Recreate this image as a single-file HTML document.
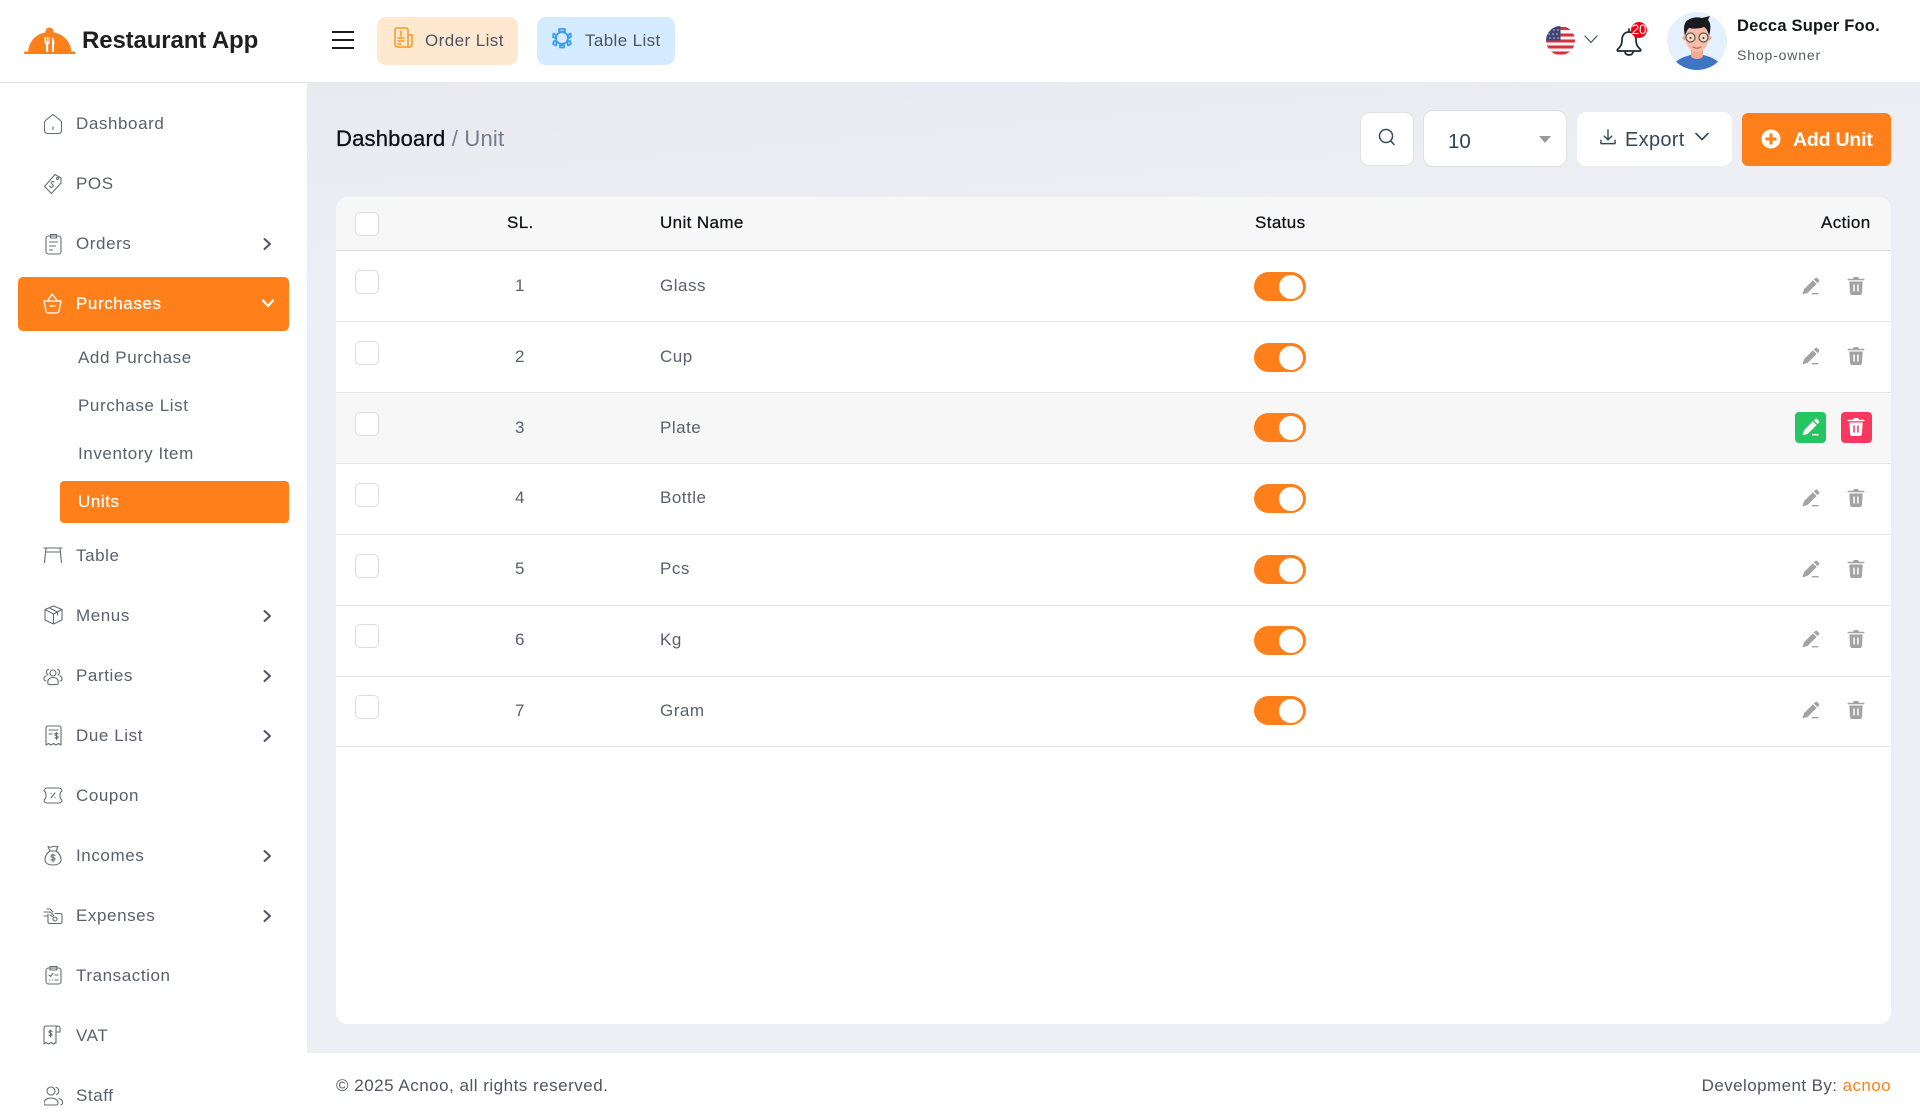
<!DOCTYPE html>
<html><head><meta charset="utf-8"><title>Unit</title>
<style>
*{box-sizing:border-box;margin:0;padding:0}
html,body{width:1920px;height:1119px;overflow:hidden;background:#fff}
body{position:relative;font-family:"Liberation Sans",sans-serif;color:#5a606c}
.a,.t,svg.i{position:absolute}
.t{white-space:nowrap;line-height:24px;height:24px}
.m{left:76px;font-size:17px;letter-spacing:.58px;color:#5a606c}
.s{left:78px;font-size:17px;letter-spacing:.58px;color:#5a606c}
.th{font-size:17px;letter-spacing:.38px;color:#0f1116;-webkit-text-stroke:.25px #0f1116}
.td{font-size:17px;letter-spacing:.5px;color:#5a606c}
svg.i{fill:none;stroke:#666b75;stroke-width:1.1;stroke-linecap:round;stroke-linejoin:round}
svg.c{stroke:#4e5562;stroke-width:2}
svg.g{stroke:none;fill:#a3a3a3}
svg.w{stroke:none;fill:#fff}
.cb{position:absolute;left:355px;width:24px;height:24px;border:1.5px solid #dcdcde;border-radius:5px;background:#fff}
.tg{position:absolute;left:1254px;width:52px;height:29px;border-radius:15px;background:#ff801a}
.tg:after{content:"";position:absolute;left:25px;top:2.5px;width:24px;height:24px;border-radius:50%;background:#fff}
.ln{position:absolute;left:336px;width:1555px;height:1px;background:#e6e6e8}
.btn{position:absolute;border-radius:9px}
</style></head><body>
<svg width="0" height="0" style="position:absolute"><defs>
<symbol id="pen" viewBox="0 0 18 18"><path d="M13 1.200a1.700 1.700 0 0 1 2.400 0l1.300 1.300a1.700 1.700 0 0 1 0 2.400l-1.200 1.200-3.700-3.700zM10.900 3.300l3.700 3.700-8.800 8.800-4.400 1.400a.6.6 0 0 1-.8-.7l1.500-4.400zM10 16h6.500v1.400H10z"/></symbol>
<symbol id="trash" viewBox="0 0 18 18"><path d="M6 1.700C6.300.6 7 0 8 0h2c1 0 1.700.6 2 1.700h4.700c.5 0 .8.300.8.700s-.3.800-.8.800H1.300c-.5 0-.8-.4-.8-.8s.3-.7.800-.7zM2.300 4.500h13.400l-.8 11.500c-.1 1.200-1 2-2.100 2H5.200c-1.100 0-2-.8-2.100-2zM6.300 7.500v7h1.500v-7zm3.900 0v7h1.500v-7z" fill-rule="evenodd"/></symbol>
<symbol id="chev" viewBox="0 0 10 14"><path d="M2 2l5.500 5L2 12"/></symbol>
</defs></svg>

<!-- main bg -->
<div class="a" style="left:307px;top:82px;width:1613px;height:971px;background:linear-gradient(175deg,#e9eaf0 0,#eeeef5 20%,#eeeef5 100%)"></div>
<div class="a" style="left:0;top:82px;width:307px;height:1px;background:#e2e2e4"></div>

<!-- logo -->
<svg class="i" style="left:24px;top:27px;stroke:none" width="52" height="28" viewBox="0 0 52 28">
<circle cx="25.500" cy="4.500" r="4" fill="#ff801a"/><path d="M4 26C4.500 13 14 5 25.500 5S47 13 47.500 26z" fill="#ff801a"/><rect x="0" y="24.500" width="51.500" height="2.500" rx="1" fill="#ff801a"/>
<path d="M20.500 10v5c0 1.500.7 2.200 1.500 2.500V25h2.200v-7.500c.8-.3 1.400-1 1.400-2.500v-5h-1v4.500h-.8V10h-1v4.500H22V10z" fill="#fff"/><path d="M28 9.500c1.500 1.500 2.500 4 2.500 7.500h-.5v8h-2z" fill="#fff"/></svg>
<div class="t" style="left:82px;top:29px;font-size:24px;font-weight:bold;color:#1f1f1f;letter-spacing:-.12px">Restaurant App</div>

<!-- hamburger -->
<div class="a" style="left:332px;top:31px;width:22px;height:2px;background:#1a1c20"></div>
<div class="a" style="left:332px;top:39px;width:22px;height:2px;background:#1a1c20"></div>
<div class="a" style="left:332px;top:47px;width:22px;height:2px;background:#1a1c20"></div>

<!-- quick buttons -->
<div class="btn" style="left:377px;top:17px;width:141px;height:48px;background:#ffe8cf"></div>
<svg class="i" style="left:394px;top:27px;stroke:#f7971e;stroke-width:1.500" width="20" height="22" viewBox="0 0 20 22"><path d="M14 20H4a3 3 0 0 1-3-3V3a2 2 0 0 1 2-2h9a2 2 0 0 1 2 2v17a3 3 0 0 0 4-3V8h-4"/><path d="M4 11h6M4 14h6M4 17h3M7 4v5" /></svg>
<div class="t" style="left:425px;top:29px;font-size:17px;letter-spacing:.42px;color:#4e5562">Order List</div>
<div class="btn" style="left:537px;top:17px;width:138px;height:48px;background:#d5ebff"></div>
<svg class="i" style="left:551px;top:27px;stroke:#3d9bf0;stroke-width:1.800" width="22" height="22" viewBox="0 0 22 22"><circle cx="11" cy="11" r="6"/><path d="M8 2h6v2.500H8zM2.500 6.500l3 1.500-1.500 3-2-1zM19.500 6.500l-3 1.500 1.500 3 2-1zM3 14l3 1-1 3.500-3-1.500zM19 14l-3 1 1 3.500 3-1.500zM9 18h4v2.500H9z"/></svg>
<div class="t" style="left:585px;top:29px;font-size:17px;letter-spacing:.38px;color:#4e5562">Table List</div>

<!-- flag -->
<svg class="i" style="left:1546px;top:26px;stroke:none" width="29" height="29" viewBox="0 0 29 29"><defs><clipPath id="fc"><circle cx="14.500" cy="14.500" r="14.500"/></clipPath></defs><g clip-path="url(#fc)"><rect width="29" height="29" fill="#f5f5f7"/><path d="M0 1h29v3H0zM0 7.500h29v3H0zM0 13.500h29v3H0zM0 19.500h29v3H0zM0 25.500h29v3H0z" fill="#d6313c"/><rect width="14.500" height="14.500" fill="#3d4574"/><g fill="#c9cde0"><circle cx="4" cy="4" r=".8"/><circle cx="8" cy="4" r=".8"/><circle cx="12" cy="4" r=".8"/><circle cx="3" cy="8" r=".8"/><circle cx="7" cy="8" r=".8"/><circle cx="11" cy="8" r=".8"/><circle cx="4" cy="12" r=".8"/><circle cx="8" cy="12" r=".8"/><circle cx="12" cy="12" r=".8"/></g></g></svg>
<svg class="i" style="left:1584px;top:35px;stroke:#4a4f58;stroke-width:1.200" width="14" height="9" viewBox="0 0 14 9"><path d="M1 1l6 6.500L13 1"/></svg>
<!-- bell -->
<svg class="i" style="left:1616px;top:27px;stroke:#1c2733;stroke-width:1.700" width="26" height="30" viewBox="0 0 26 30"><path d="M13 2v3M13 5c-5 0-7 4-7 8 0 5-2 7-4.500 9.500-.5.500-.2 1.500.5 1.500h22c.7 0 1-1 .5-1.500C22 20 20 18 20 13c0-4-2-8-7-8zM9 25c.5 2 2 3 4 3s3.500-1 4-3"/></svg>
<div class="a" style="left:1631px;top:22px;width:16px;height:16px;border-radius:50%;background:#f10010;color:#fff;font-size:13.500px;line-height:16px;text-align:center;letter-spacing:-.2px">20</div>
<!-- avatar -->
<svg class="i" style="left:1667px;top:12px;stroke:none" width="60" height="58" viewBox="0 0 60 58"><defs><clipPath id="av"><ellipse cx="30" cy="29" rx="30" ry="29"/></clipPath></defs><g clip-path="url(#av)"><rect width="60" height="58" fill="#e4f1fc"/><path d="M5 58C6 49 15 45 24 43h12c9 2 18 6 19 15z" fill="#3d74c4"/><path d="M24 34h12v9c0 3-3 4-6 4s-6-1-6-4z" fill="#f2aa92"/><ellipse cx="30" cy="26" rx="11.500" ry="14" fill="#f7bda6"/><circle cx="18" cy="26" r="2.500" fill="#f2aa92"/><circle cx="42" cy="26" r="2.500" fill="#f2aa92"/><path d="M18 24c-2-8-1-14 3-16 4-3 10-3 14-2l8-2-2 4c3 3 3 9 1 16-1-4-2-7-5-9-5 2-11 2-15 1-2 2-3 5-4 8z" fill="#1a1b20"/><g fill="#f3e5db" fill-opacity=".7" stroke="#6b5a4a" stroke-width="1.300"><circle cx="23.500" cy="25.500" r="4.500"/><circle cx="36.500" cy="25.500" r="4.500"/></g><circle cx="23.500" cy="26" r="1" fill="#333"/><circle cx="36.500" cy="26" r="1" fill="#333"/><path d="M26 35c2.500 1.500 5.500 1.500 8 0" stroke="#c8604f" stroke-width="1.100" fill="none"/></g></svg>
<div class="t" style="left:1737px;top:14px;font-size:16.500px;font-weight:bold;letter-spacing:.22px;color:#14161a">Decca Super Foo.</div>
<div class="t" style="left:1737px;top:43px;font-size:14px;letter-spacing:.85px;color:#555b66">Shop-owner</div>

<!-- sidebar items -->
<svg class="i" style="left:43px;top:113px" width="20" height="22" viewBox="0 0 20 22"><path d="M10 1.500L2.500 7.500a3 3 0 0 0-1 2v8a3 3 0 0 0 3 3h11a3 3 0 0 0 3-3v-8a3 3 0 0 0-1-2zM10 14v2.500"/></svg>
<div class="t m" style="top:112px">Dashboard</div>
<svg class="i" style="left:43px;top:173px" width="20" height="22" viewBox="0 0 20 22"><path d="M12 1.500l6 3.500v5L8.500 20.500 1.500 13.500z" /><circle cx="14.500" cy="5.500" r="1"/><path d="M11 9c-1.500-1-3.500 0-2.500 1.500S11 12 10 13.500 7 14 6.500 13"/></svg>
<div class="t m" style="top:172px">POS</div>
<svg class="i" style="left:45px;top:233px" width="17" height="22" viewBox="0 0 17 22"><rect x="1" y="3" width="15" height="18" rx="2.500"/><path d="M5.500 1.500h6V5h-6zM4.500 9h8M4.500 13h6M4.500 17h3"/></svg>
<div class="t m" style="top:232px">Orders</div>
<svg class="i c" style="left:262px;top:237px" width="11" height="14" viewBox="0 0 10 14"><use href="#chev"/></svg>

<div class="a" style="left:18px;top:277px;width:271px;height:54px;background:#ff801a;border-radius:5px"></div>
<svg class="i" style="left:43px;top:293px;stroke:#fff;stroke-width:1.300" width="19" height="22" viewBox="0 0 19 22"><path d="M1 8h17l-2 10a2.500 2.500 0 0 1-2.500 2h-8A2.500 2.500 0 0 1 3 18zM4.500 8L9 1l5.500 7M7 13h5"/></svg>
<div class="t m" style="top:292px;color:#fff;-webkit-text-stroke:.2px #fff">Purchases</div>
<svg class="i" style="left:261px;top:298px;stroke:#fff;stroke-width:2.200" width="14" height="11" viewBox="0 0 14 11"><path d="M2 2.500l5 5.500 5-5.500"/></svg>

<div class="t s" style="top:346px">Add Purchase</div>
<div class="t s" style="top:394px">Purchase List</div>
<div class="t s" style="top:442px">Inventory Item</div>
<div class="a" style="left:60px;top:481px;width:229px;height:42px;background:#ff801a;border-radius:4px"></div>
<div class="t s" style="top:490px;color:#fff;-webkit-text-stroke:.2px #fff">Units</div>

<svg class="i" style="left:43px;top:546px" width="20" height="18" viewBox="0 0 20 18"><path d="M1 2h18M3 2L1.500 16.500M17 2l1.500 14.500M3 6h14"/></svg>
<div class="t m" style="top:544px">Table</div>
<svg class="i" style="left:44px;top:605px" width="19" height="20" viewBox="0 0 19 20"><path d="M9.500 1L18 4.500v10.500L9.500 19 1 15V4.500zM1 4.500L9.500 9 18 4.500M9.500 9v10M5 2.800l8.500 4.200v3"/></svg>
<div class="t m" style="top:604px">Menus</div>
<svg class="i c" style="left:262px;top:609px" width="11" height="14" viewBox="0 0 10 14"><use href="#chev"/></svg>
<svg class="i" style="left:43px;top:666px" width="20" height="20" viewBox="0 0 20 20"><circle cx="10" cy="7" r="3"/><path d="M5 18c-1-5 2-6.500 5-6.500s6 1.500 5 6.500c-.3.800-9.700.8-10 0zM5 9C3 8 3 3.500 5.500 3.500M15 9c2-1 2-5.500-.5-5.500M3 15c-3-.500-2.500-4 0-5M17 15c3-.500 2.500-4 0-5"/></svg>
<div class="t m" style="top:664px">Parties</div>
<svg class="i c" style="left:262px;top:669px" width="11" height="14" viewBox="0 0 10 14"><use href="#chev"/></svg>
<svg class="i" style="left:45px;top:725px" width="17" height="21" viewBox="0 0 17 21"><path d="M1 3a2 2 0 0 1 2-2h11a2 2 0 0 1 2 2v17l-2.500-1.500-2.500 1.500-2.500-1.500L6 20l-2.500-1.500L1 20zM4 5h9M4 9h3M11.500 7.500v7M13 9c-1-1-3-1-3 .5s3 1 3 2.500-2 1.500-3 .5"/></svg>
<div class="t m" style="top:724px">Due List</div>
<svg class="i c" style="left:262px;top:729px" width="11" height="14" viewBox="0 0 10 14"><use href="#chev"/></svg>
<svg class="i" style="left:43px;top:787px" width="20" height="17" viewBox="0 0 20 17"><path d="M4 1h12a3 3 0 0 1 3 3c-1 .5-2 2-2 4.500s1 4 2 4.500a3 3 0 0 1-3 3H4a3 3 0 0 1-3-3c1-.5 2-2 2-4.500S2 4.500 1 4a3 3 0 0 1 3-3zM8 11l4-5M8 6.500h.1M12 10.500h.1"/></svg>
<div class="t m" style="top:784px">Coupon</div>
<svg class="i" style="left:44px;top:845px" width="18" height="21" viewBox="0 0 18 21"><path d="M6 6L4 1.500c2 1 3 1 5 0s3 1 5 0L12 6zM6 6C3 8 1 11 1 14.500 1 18 4 20 9 20s8-2 8-5.500C17 11 15 8 12 6zM11 10.500c-1-1-4-1-4 .7s4 1 4 2.700-3 1.800-4 .7M9 9v8"/></svg>
<div class="t m" style="top:844px">Incomes</div>
<svg class="i c" style="left:262px;top:849px" width="11" height="14" viewBox="0 0 10 14"><use href="#chev"/></svg>
<svg class="i" style="left:43px;top:907px" width="20" height="18" viewBox="0 0 20 18"><path d="M5 7V15a1.500 1.500 0 0 0 1.500 1.500H17.500A1.500 1.500 0 0 0 19 15V8a1.500 1.500 0 0 0-1.500-1.500H12M1 5h6l3 2.500c1 1 0 2.500-1.500 1.500L7 8M1 9h4M4 2h3l3 3"/><circle cx="12" cy="12" r="2"/></svg>
<div class="t m" style="top:904px">Expenses</div>
<svg class="i c" style="left:262px;top:909px" width="11" height="14" viewBox="0 0 10 14"><use href="#chev"/></svg>
<svg class="i" style="left:45px;top:965px" width="17" height="20" viewBox="0 0 17 20"><rect x="1" y="3" width="15" height="16" rx="2.500"/><path d="M5 1.500h7V5H5zM4 10l1.500 1.500L8 8.500M10 10h3M4.500 15h.1M7.500 15h.1M10 15h3"/></svg>
<div class="t m" style="top:964px">Transaction</div>
<svg class="i" style="left:43px;top:1025px" width="20" height="20" viewBox="0 0 20 20"><path d="M14 1H3a2 2 0 0 0-2 2v16l2-1.500 2.500 1.500L8 17.500l2.500 1.500 2-1.500.5.500V3a2 2 0 0 1 4 0v4h-4"/><path d="M9 6.500c-1-1-3-1-3 .5s3 1 3 2.500-2 1.500-3 .5M7.500 5v7"/></svg>
<div class="t m" style="top:1024px">VAT</div>
<svg class="i" style="left:44px;top:1086px" width="19" height="20" viewBox="0 0 19 20"><circle cx="7" cy="5" r="4"/><path d="M2 19h10c2 0 2-1 2-2 0-3-3-5-7-5s-7 2-7 5c0 1 0 2 2 2zM12 1.500c3 0 4 5.500 .5 7M15 12.500c3 1 4 3 3.500 5-.2.700-.8 1-1.500 1"/></svg>
<div class="t m" style="top:1084px">Staff</div>

<!-- breadcrumb -->
<div class="t" style="left:336px;top:127px;font-size:22px;letter-spacing:.2px;color:#0f1116"><span style="-webkit-text-stroke:.3px #0f1116">Dashboard</span> <span style="color:#747b8a">/ Unit</span></div>

<!-- toolbar -->
<div class="a" style="left:1360px;top:112px;width:54px;height:54px;background:#fff;border:1.500px solid #e1e1e6;border-radius:9px"></div>
<svg class="i" style="left:1378px;top:128px;stroke:#2f4a5c;stroke-width:1.500" width="18" height="18" viewBox="0 0 18 18"><circle cx="8" cy="8" r="6.500"/><path d="M12.700 12.700l3.300 3.800"/></svg>
<div class="a" style="left:1423px;top:110px;width:144px;height:57px;background:#fff;border:1.500px solid #dfdfe4;border-radius:10px"></div>
<div class="t" style="left:1448px;top:130px;font-size:20.500px;color:#2c4456">10</div>
<div class="a" style="left:1539px;top:136px;width:0;height:0;border-left:6.500px solid transparent;border-right:6.500px solid transparent;border-top:7px solid #999"></div>
<div class="a" style="left:1577px;top:112px;width:155px;height:54px;background:#fff;border-radius:9px"></div>
<svg class="i" style="left:1600px;top:129px;stroke:#32495a;stroke-width:1.500" width="16" height="17" viewBox="0 0 17 18"><path d="M8.500 1v10M4.500 7.500l4 4 4-4M1 12v3.500h15V12"/></svg>
<div class="t" style="left:1625px;top:128px;font-size:20px;color:#32495a;letter-spacing:.3px">Export</div>
<svg class="i" style="left:1695px;top:132px;stroke:#32495a;stroke-width:1.600" width="14" height="10" viewBox="0 0 14 10"><path d="M1 1.500l6 6 6-6"/></svg>
<div class="a" style="left:1742px;top:113px;width:149px;height:53px;background:#ff801a;border-radius:6px"></div>
<svg class="i" style="left:1761px;top:129px;stroke:none" width="20" height="20" viewBox="0 0 20 20"><circle cx="10" cy="10" r="9.500" fill="#fff"/><path d="M8.500 4.500h3v4h4v3h-4v4h-3v-4h-4v-3h4z" fill="#ff801a"/></svg>
<div class="t" style="left:1793px;top:128px;font-size:19.500px;font-weight:bold;color:#fff;letter-spacing:-.2px">Add Unit</div>

<!-- table card -->
<div class="a" style="left:336px;top:197px;width:1555px;height:827px;background:#fff;border-radius:12px"></div>
<div class="a" style="left:336px;top:197px;width:1555px;height:53px;background:#f7f7f8;border-radius:12px 12px 0 0"></div>
<div class="a" style="left:336px;top:392px;width:1555px;height:71px;background:#f7f7f8"></div>
<div class="ln" style="top:250px;background:#d9d9dc"></div>
<div class="ln" style="top:321px"></div><div class="ln" style="top:392px"></div><div class="ln" style="top:463px"></div><div class="ln" style="top:534px"></div><div class="ln" style="top:605px"></div><div class="ln" style="top:676px"></div><div class="ln" style="top:746px"></div>

<div class="cb" style="top:212px"></div>
<div class="t th" style="left:507px;top:211px">SL.</div>
<div class="t th" style="left:660px;top:211px">Unit Name</div>
<div class="t th" style="left:1255px;top:211px">Status</div>
<div class="t th" style="left:1821px;top:211px">Action</div>

<!-- rows -->
<div class="cb" style="top:270px"></div><div class="t td" style="left:515px;top:274px">1</div><div class="t td" style="left:660px;top:274px">Glass</div><div class="tg" style="top:272px"></div>
<svg class="i g" style="left:1802px;top:277px" width="18" height="18"><use href="#pen"/></svg><svg class="i g" style="left:1847px;top:277px" width="18" height="18"><use href="#trash"/></svg>

<div class="cb" style="top:341px"></div><div class="t td" style="left:515px;top:345px">2</div><div class="t td" style="left:660px;top:345px">Cup</div><div class="tg" style="top:343px"></div>
<svg class="i g" style="left:1802px;top:347px" width="18" height="18"><use href="#pen"/></svg><svg class="i g" style="left:1847px;top:347px" width="18" height="18"><use href="#trash"/></svg>

<div class="cb" style="top:412px"></div><div class="t td" style="left:515px;top:416px">3</div><div class="t td" style="left:660px;top:416px">Plate</div><div class="tg" style="top:413px"></div>
<div class="a" style="left:1795px;top:412px;width:31px;height:31px;background:#25c662;border-radius:4px"></div><div class="a" style="left:1841px;top:412px;width:31px;height:31px;background:#f8385e;border-radius:4px"></div>
<svg class="i w" style="left:1802px;top:418px" width="18" height="18"><use href="#pen"/></svg><svg class="i w" style="left:1847px;top:418px" width="18" height="18"><use href="#trash"/></svg>

<div class="cb" style="top:483px"></div><div class="t td" style="left:515px;top:486px">4</div><div class="t td" style="left:660px;top:486px">Bottle</div><div class="tg" style="top:484px"></div>
<svg class="i g" style="left:1802px;top:489px" width="18" height="18"><use href="#pen"/></svg><svg class="i g" style="left:1847px;top:489px" width="18" height="18"><use href="#trash"/></svg>

<div class="cb" style="top:554px"></div><div class="t td" style="left:515px;top:557px">5</div><div class="t td" style="left:660px;top:557px">Pcs</div><div class="tg" style="top:555px"></div>
<svg class="i g" style="left:1802px;top:560px" width="18" height="18"><use href="#pen"/></svg><svg class="i g" style="left:1847px;top:560px" width="18" height="18"><use href="#trash"/></svg>

<div class="cb" style="top:624px"></div><div class="t td" style="left:515px;top:628px">6</div><div class="t td" style="left:660px;top:628px">Kg</div><div class="tg" style="top:626px"></div>
<svg class="i g" style="left:1802px;top:630px" width="18" height="18"><use href="#pen"/></svg><svg class="i g" style="left:1847px;top:630px" width="18" height="18"><use href="#trash"/></svg>

<div class="cb" style="top:695px"></div><div class="t td" style="left:515px;top:699px">7</div><div class="t td" style="left:660px;top:699px">Gram</div><div class="tg" style="top:696px"></div>
<svg class="i g" style="left:1802px;top:701px" width="18" height="18"><use href="#pen"/></svg><svg class="i g" style="left:1847px;top:701px" width="18" height="18"><use href="#trash"/></svg>

<!-- footer -->
<div class="t" style="left:336px;top:1074px;font-size:17px;letter-spacing:.5px;color:#4f5560">© 2025 Acnoo, all rights reserved.</div>
<div class="t" style="right:29px;top:1074px;font-size:17px;letter-spacing:.42px;color:#4f5560">Development By: <span style="color:#ff801a">acnoo</span></div>
</body></html>
